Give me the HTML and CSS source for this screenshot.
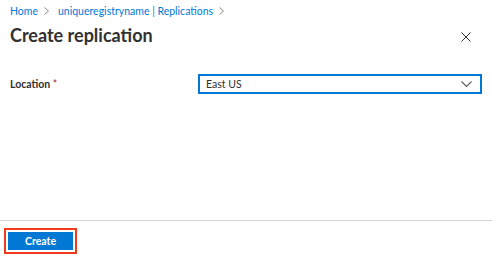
FILE: index.html
```html
<!DOCTYPE html>
<html lang="en">
  <head>
    <meta charset="UTF-8" />
    <meta name="viewport" content="width=device-width, initial-scale=1.0" />
    <title>Create replication</title>
    <link rel="stylesheet" href="styles.css">
  </head>
  <body>
    <div class="panel">
      <div class="panel-head">
        <nav class="crumbs">
          <a href="#">Home</a>
          <svg class="sep" width="5" height="8" viewBox="0 0 5 8">
            <path d="M0.5 0.5 L4.5 4 L0.5 7.5" stroke="#8a8886" stroke-width="1" fill="none" />
          </svg>
          <a href="#">uniqueregistryname | Replications</a>
          <svg class="sep" width="5" height="8" viewBox="0 0 5 8">
            <path d="M0.5 0.5 L4.5 4 L0.5 7.5" stroke="#8a8886" stroke-width="1" fill="none" />
          </svg>
        </nav>
        <div class="title-row">
          <h1 class="title">Create replication</h1>
          <button class="close" type="button" aria-label="Close">
            <svg width="10" height="10" viewBox="0 0 10 10">
              <path d="M0.5 0.5 L9.5 9.5 M9.5 0.5 L0.5 9.5" stroke="#323130" stroke-width="1" fill="none" />
            </svg>
          </button>
        </div>
      </div>
      <div class="panel-body">
        <div class="field">
          <label class="field-label">Location <span class="req">*</span></label>
          <div class="dropdown">
            <span>East US</span>
            <svg width="11" height="7" viewBox="0 0 11 7">
              <path d="M0.5 0.5 L5.5 5.5 L10.5 0.5" stroke="#605e5c" stroke-width="1.2" fill="none" />
            </svg>
          </div>
        </div>
      </div>
      <div class="panel-foot">
        <div class="highlight">
          <button class="btn-primary" type="button">Create</button>
        </div>
      </div>
    </div>
  </body>
</html>
```

FILE: styles.css
```css
body {
  margin: 0;
  background: #fff;
  font-family: Lato, "Open Sans", sans-serif;
  color: #323130;
}
.panel {
  height: 260px;
  display: flex;
  flex-direction: column;
}
.panel-head {
  padding: 3px 10px 0 10px;
}
.crumbs {
  font-size: 10.5px;
  line-height: 16px;
  display: flex;
  align-items: center;
}
.crumbs a {
  color: #0078d4;
  text-decoration: none;
}
.crumbs .sep {
  margin: 0 9px 0 6px;
}
.title-row {
  display: flex;
  align-items: center;
  justify-content: space-between;
  margin-top: 3px;
}
.title {
  font-size: 18px;
  font-weight: 700;
  line-height: 26px;
  margin: 0;
}
.close {
  border: none;
  background: none;
  padding: 0;
  margin-right: 11px;
  margin-top: 3px;
  display: flex;
}
.panel-body {
  flex: 1;
  padding: 26px 10px 0 10px;
}
.field {
  display: flex;
  align-items: center;
}
.field-label {
  width: 188px;
  flex-shrink: 0;
  font-size: 10.5px;
  font-weight: 700;
}
.req {
  color: #a4262c;
  font-weight: 400;
}
.dropdown {
  width: 272px;
  height: 16px;
  border: 2px solid #0078d4;
  display: flex;
  align-items: center;
  justify-content: space-between;
  padding: 0 8px 0 6px;
  font-size: 10.5px;
  box-sizing: content-box;
}
.panel-foot {
  border-top: 1px solid #d6d6d6;
  padding: 7px 0 0 4px;
  height: 32px;
}
.highlight {
  display: inline-block;
  border: 2px solid #f03c1e;
  padding: 2px;
}
.btn-primary {
  display: block;
  width: 65px;
  height: 18px;
  background: #0078d4;
  color: #fff;
  border: none;
  font-family: inherit;
  font-size: 10.5px;
  font-weight: 700;
  padding: 0;
}
```
